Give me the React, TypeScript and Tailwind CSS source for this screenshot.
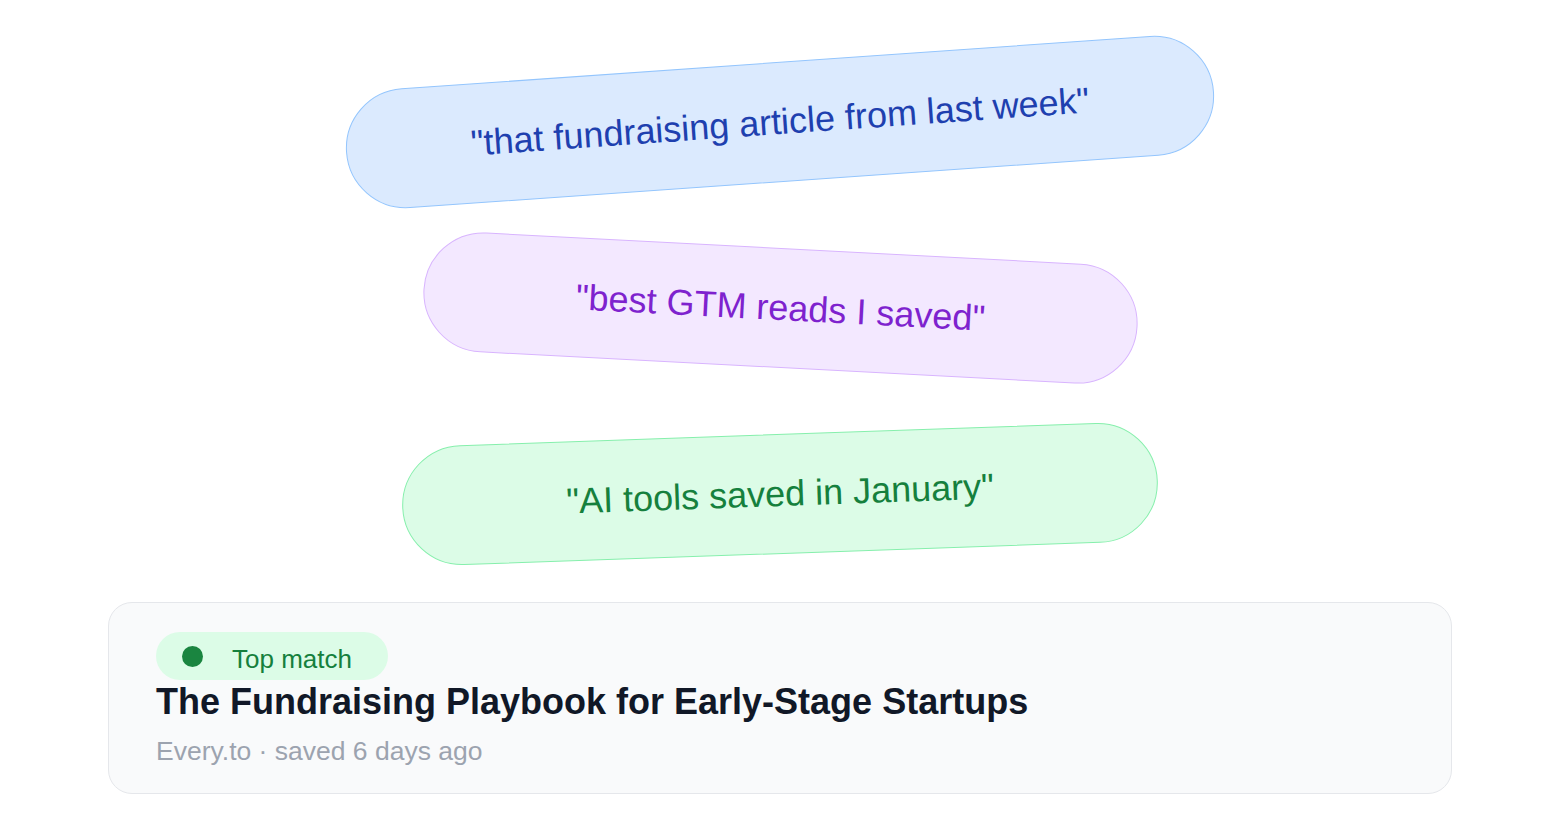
const queries = [
  {
    text: '"that fundraising article from last week"',
    box: 'w-[870px] -rotate-[4deg] bg-[#dbeafe] border-[#93c5fd] text-[#1e40af]',
  },
  {
    text: '"best GTM reads I saved"',
    box: 'w-[715px] rotate-[3deg] bg-[#f3e8ff] border-[#d8b4fe] text-[#7e22ce]',
  },
  {
    text: '"AI tools saved in January"',
    box: 'w-[756px] -rotate-[2deg] bg-[#dcfce7] border-[#86efac] text-[#15803d]',
  },
];

function QueryPill({ text, box }: { text: string; box: string }) {
  return (
    <div
      className={`h-[120px] flex items-center justify-center rounded-full border text-[36px] leading-[40px] whitespace-nowrap ${box}`}
    >
      {text}
    </div>
  );
}

function ResultCard() {
  return (
    <div className="w-full rounded-3xl border border-[#e5e7eb] bg-[#f9fafb] px-[47px] pt-[29px] pb-[24px]">
      <div className="inline-flex h-12 items-center rounded-full bg-[#dcfce7] pl-[26px] pr-[36px]">
        <span className="h-[21px] w-[21px] rounded-full bg-[#1a8540]" />
        <span className="ml-[29px] mt-[5px] text-[26px] leading-[30px] text-[#15803d]">Top match</span>
      </div>
      <h2 className="text-[36px] leading-[43px] font-bold text-[#111827]">
        The Fundraising Playbook for Early-Stage Startups
      </h2>
      <p className="mt-[10px] text-[26.5px] leading-[36px] text-[#9ca3af]">
        Every.to · saved 6 days ago
      </p>
    </div>
  );
}

export default function App() {
  return (
    <div
      className="min-h-screen bg-white flex flex-col items-center px-[108px] pt-[62px]"
      style={{ fontFamily: '"Liberation Sans", Arial, Helvetica, sans-serif' }}
    >
      <div className="flex flex-col items-center gap-[66px]">
        {queries.map((q) => (
          <QueryPill key={q.text} text={q.text} box={q.box} />
        ))}
      </div>
      <div className="mt-12 w-full">
        <ResultCard />
      </div>
    </div>
  );
}
